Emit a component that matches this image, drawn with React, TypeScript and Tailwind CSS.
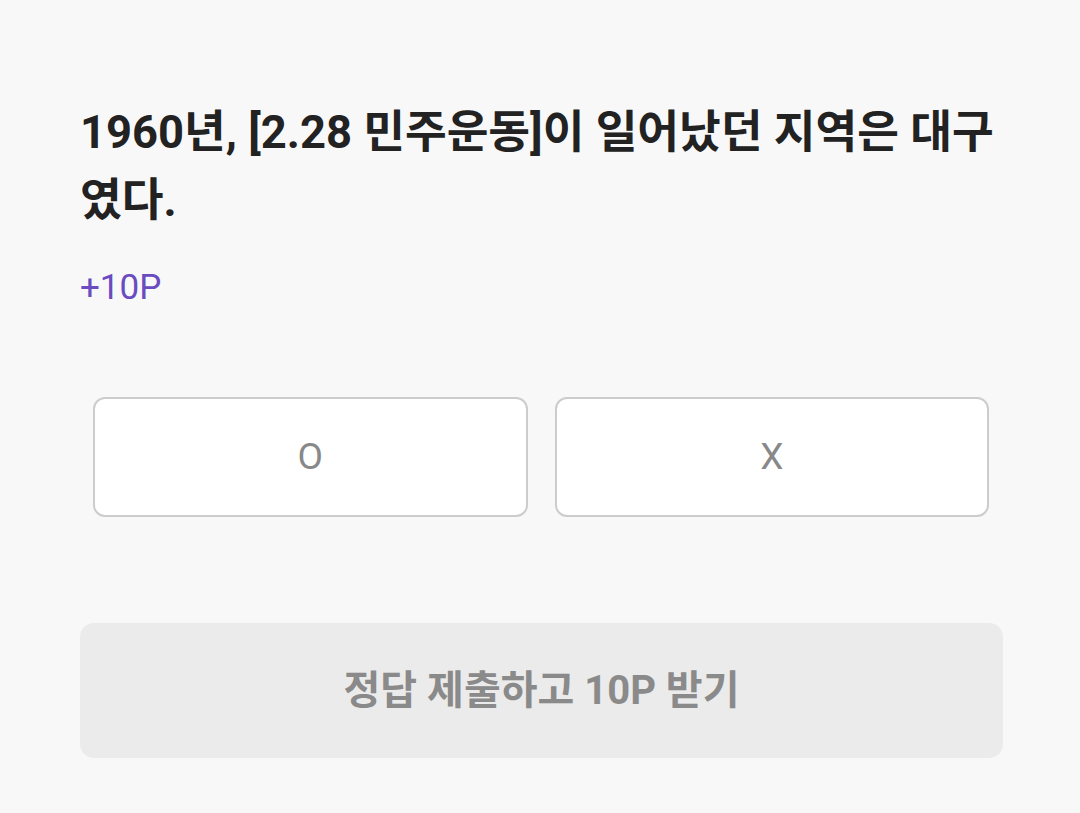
import React from "react";

export default function App() {
  const font = { fontFamily: 'Roboto, "Noto Sans CJK KR", sans-serif' };
  return (
    <div className="w-[1080px] h-[813px] bg-[#f8f8f8] overflow-hidden" style={font}>
      <div className="pl-[80px] pr-[77px] pt-[99px]">
        <h1 className="text-[45.35px] leading-[68px] font-bold text-[#222222]">
          1960년, [2.28 민주운동]이 일어났던 지역은 대구였다.
        </h1>
        <div className="mt-[31px] text-[35px] leading-[44px] text-[#6a4bc0]">+10P</div>
        <div className="mt-[87px] pl-[13px] pr-[14px] grid grid-cols-2 gap-[27px]">
          <button className="h-[120px] bg-white border-2 border-[#cccccc] rounded-[12px] text-[37px] text-[#888888]">
            O
          </button>
          <button className="h-[120px] bg-white border-2 border-[#cccccc] rounded-[12px] text-[37px] text-[#888888]">
            X
          </button>
        </div>
        <button className="mt-[106px] w-full h-[135px] bg-[#ebebeb] rounded-[14px] text-[40px] font-bold text-[#8a8a8a]">
          정답 제출하고 10P 받기
        </button>
      </div>
    </div>
  );
}
